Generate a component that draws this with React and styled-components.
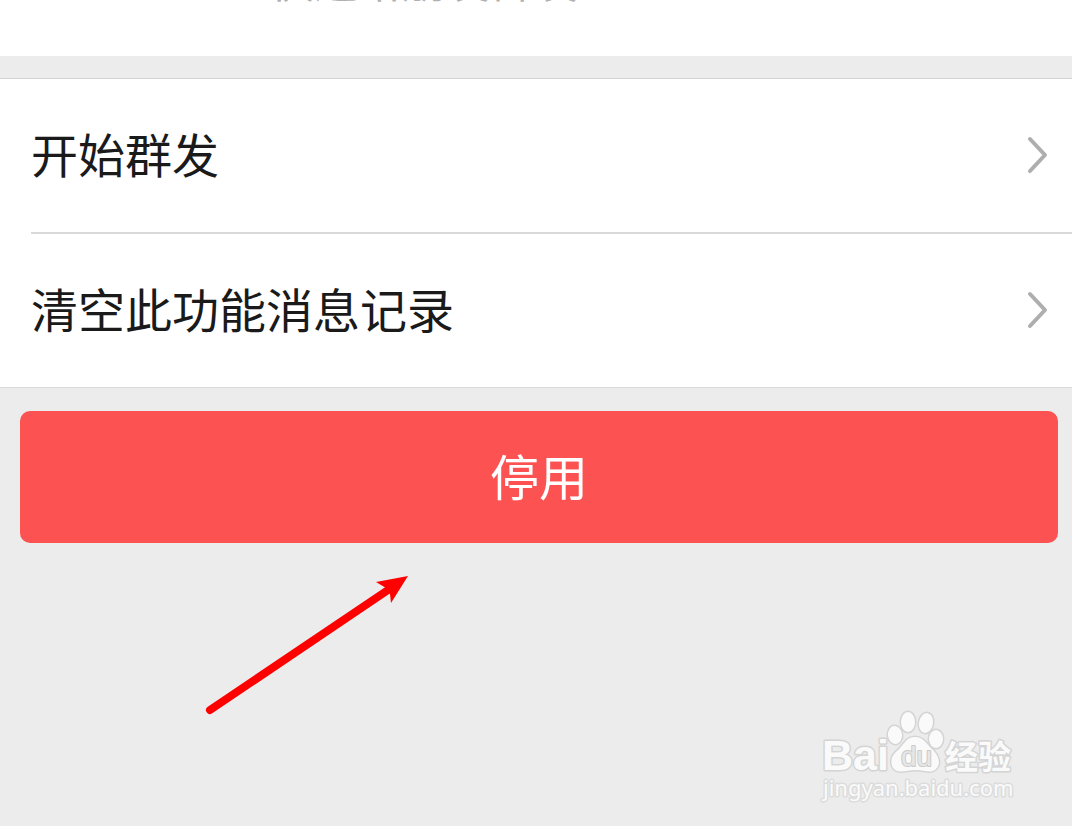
import React from 'react';
import styled, { createGlobalStyle } from 'styled-components';

const GlobalStyle = createGlobalStyle`
  * {
    box-sizing: border-box;
  }

  body {
    margin: 0;
    background: #ececec;
    font-family: 'Noto Sans CJK SC', sans-serif;
  }
`;

const rows = ['开始群发', '清空此功能消息记录'];

const App = () => {
  return (
    <>
      <GlobalStyle />
      <Page>
        <Intro>
          <IntroText>快速给朋友群发</IntroText>
        </Intro>
        <Menu>
          {rows.map((label) => (
            <MenuRow key={label} type='button'>
              <Label>{label}</Label>
              <Chevron />
            </MenuRow>
          ))}
        </Menu>
        <DisableButton type='button'>停用</DisableButton>
        <Footer>
          <Arrow />
          <Watermark />
        </Footer>
      </Page>
    </>
  );
};
export default App;

const Chevron = () => (
  <svg width='24' height='40' viewBox='0 0 24 40' fill='none' aria-hidden='true'>
    <path
      d='M4 4 L19 20 L4 36'
      stroke='#aeaeae'
      strokeWidth='4'
      strokeLinecap='round'
      strokeLinejoin='round'
    />
  </svg>
);

const Arrow = () => (
  <ArrowSvg width='210' height='146' viewBox='0 0 210 146' aria-hidden='true'>
    <path d='M10 137 L188 17' stroke='#f00' strokeWidth='8' strokeLinecap='round' />
    <path d='M208 3 L176 9 L186 15 L190 21 L191 30 Z' fill='#f00' />
  </ArrowSvg>
);

const Watermark = () => (
  <WatermarkSvg width='210' height='100' viewBox='0 0 210 100' aria-hidden='true'>
    <g fill='#fafafa' stroke='#d4d4d4' strokeWidth='3' strokeLinejoin='round' paintOrder='stroke'>
      <ellipse cx='85' cy='28' rx='7' ry='9' transform='rotate(-8 85 28)' />
      <ellipse cx='98' cy='15' rx='7' ry='10' />
      <ellipse cx='116' cy='16' rx='7' ry='10' transform='rotate(10 116 16)' />
      <ellipse cx='126' cy='32' rx='7' ry='9' />
      <path d='M105 30 C96 30 94 38 87 44 C80 50 80 57 84 62 C89 67 97 63 106 63 C114 63 121 67 126 62 C131 57 129 50 124 44 C117 38 114 30 105 30 Z' />
      <LogoText x='12' y='63'>Bai</LogoText>
      <CnText x='135' y='62'>经验</CnText>
      <UrlText x='13' y='89'>jingyan.baidu.com</UrlText>
      <DuText x='91' y='59'>du</DuText>
    </g>
  </WatermarkSvg>
);

const Page = styled.main`
  display: flex;
  flex-direction: column;
  min-height: 100vh;
`;

const Intro = styled.header`
  height: 56px;
  overflow: hidden;
  background: #fff;
`;

// the intro is scrolled up, only the feet of its last line still show
const IntroText = styled.p`
  margin: -49px 0 0 270px;
  color: #b0b0b0;
  font-size: 44px;
  line-height: 56px;
`;

const Menu = styled.div`
  margin-top: 22px;
  border-top: 1px solid #d3d3d3;
  border-bottom: 1px solid #d9d9d9;
  padding-left: 31px;
  background: #fff;
`;

const MenuRow = styled.button`
  display: flex;
  align-items: center;
  justify-content: space-between;
  width: 100%;
  height: 153px;
  border: 0;
  padding: 0 22px 2px 0;
  background: none;
  color: #1a1a1a;
  font: inherit;
  font-size: 47px;
  text-align: left;

  & + & {
    height: 155px;
    border-top: 2px solid #d9d9d9;
  }
`;

const Label = styled.span`
  padding-bottom: 4px;
`;

const DisableButton = styled.button`
  height: 132px;
  margin: 23px 14px 0 20px;
  border: 0;
  border-radius: 10px;
  padding: 0 0 6px;
  background: #fc5352;
  color: #fff;
  font: inherit;
  font-size: 49px;
`;

const Footer = styled.footer`
  display: flex;
  flex: 1;
  align-items: flex-end;
  justify-content: space-between;
  padding: 30px 52px 19px 200px;
`;

const ArrowSvg = styled.svg`
  align-self: flex-start;
`;

const WatermarkSvg = styled.svg`
  overflow: visible;
`;

const LogoText = styled.text`
  font: bold 43px 'Liberation Sans', sans-serif;
`;

const CnText = styled.text`
  font: bold 33px 'Noto Sans CJK SC', sans-serif;
`;

const UrlText = styled.text`
  stroke: #dcdcdc;
  font: 22px 'Noto Sans', sans-serif;
`;

const DuText = styled.text`
  fill: #e6e6e6;
  stroke: #cacaca;
  stroke-width: 2px;
  font: 28px 'Liberation Sans', sans-serif;
`;
